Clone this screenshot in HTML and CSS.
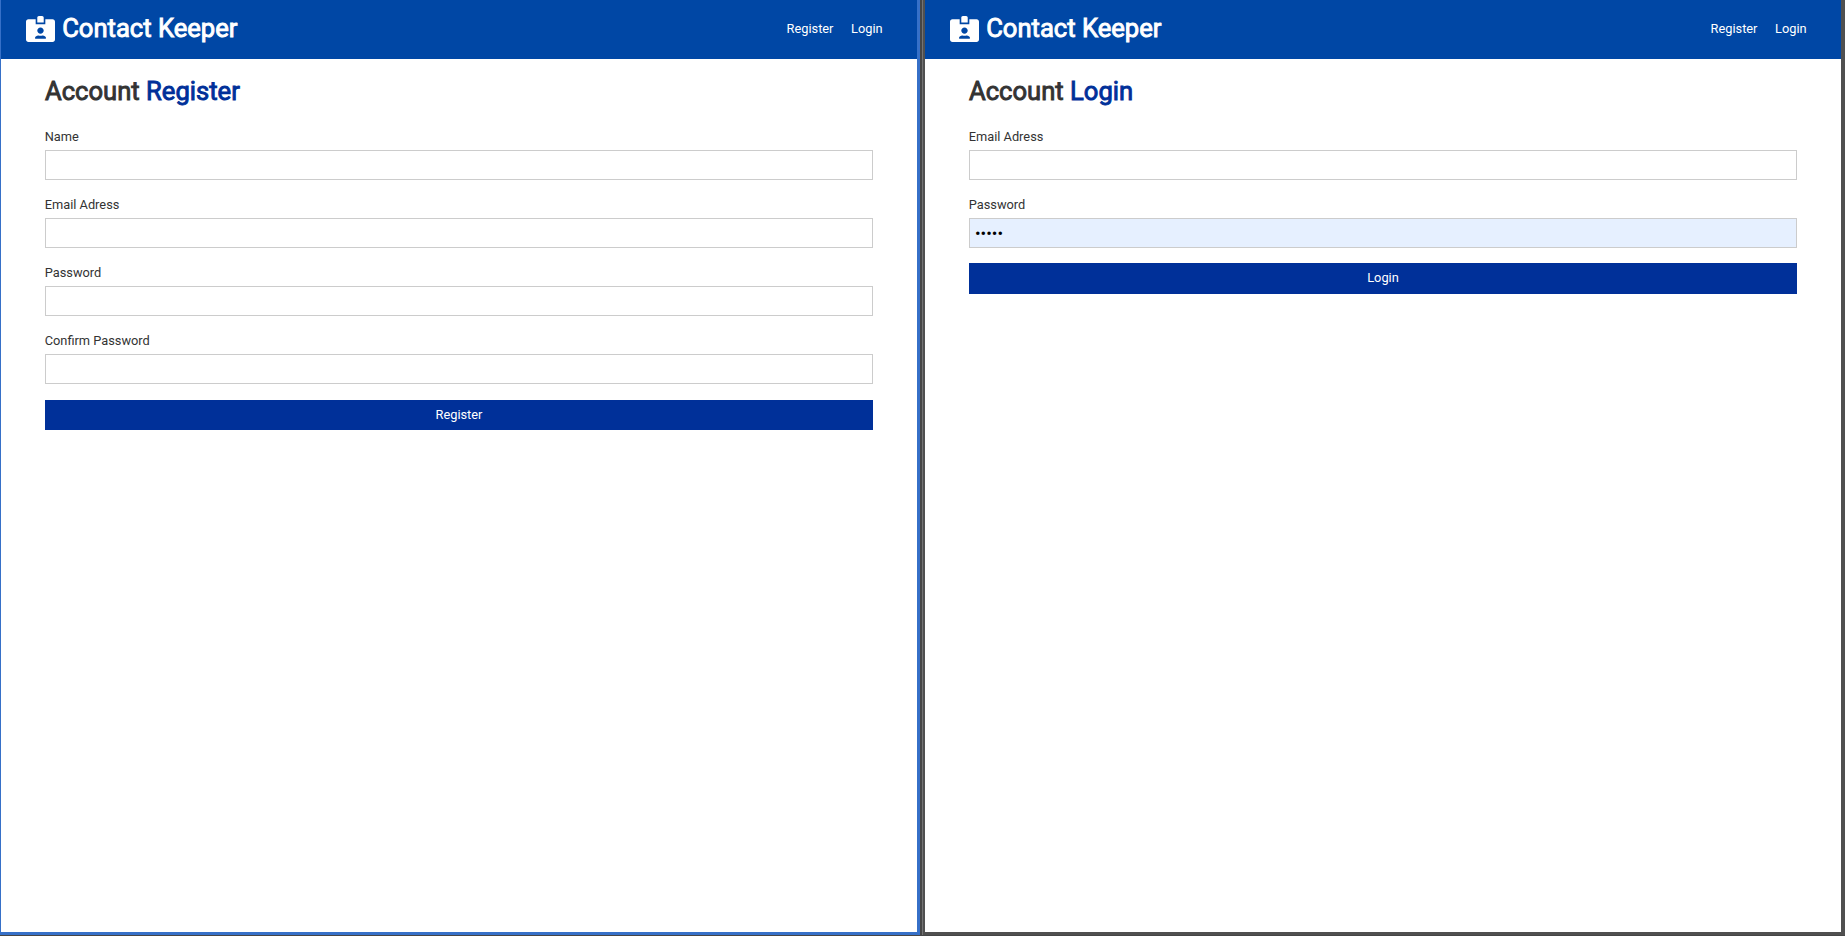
FILE: index.html
```html
<!DOCTYPE html>
<html lang="en">
<head>
<meta charset="utf-8">
<title>Contact Keeper</title>
<link rel="stylesheet" href="styles.css">
</head>
<body>
<svg class="defs" width="0" height="0"><symbol id="card" viewBox="0 0 576 512"><path d="M528 64H384v96H192V64H48C21.5 64 0 85.5 0 112v352c0 26.500 21.500 48 48 48h480c26.500 0 48-21.500 48-48V112c0-26.500-21.500-48-48-48zM288 224c35.300 0 64 28.700 64 64s-28.700 64-64 64-64-28.700-64-64 28.700-64 64-64zm93.300 224H194.700c-10.400 0-18.800-10-15.600-19.800 8.300-25.600 32.400-44.200 60.900-44.200h8.200c12.300 5.100 25.700 8 39.800 8s27.600-2.900 39.800-8h8.200c28.400 0 52.500 18.500 60.900 44.200 3.200 9.900-5.200 19.800-15.600 19.800zM352 32c0-17.700-14.300-32-32-32h-64c-17.700 0-32 14.300-32 32v96h128V32z"/></symbol></svg>
<div class="screens">
  <section class="pane pane-active">
    <header class="navbar">
      <h1 class="brand"><svg class="icon"><use href="#card"/></svg><span>Contact Keeper</span></h1>
      <nav class="links"><a>Register</a><a>Login</a></nav>
    </header>
    <main class="container">
      <h1 class="title">Account <span class="primary">Register</span></h1>
      <form>
        <div class="group"><label>Name</label><input type="text"></div>
        <div class="group"><label>Email Adress</label><input type="text"></div>
        <div class="group"><label>Password</label><input type="password"></div>
        <div class="group"><label>Confirm Password</label><input type="password"></div>
        <button class="btn btn-register" type="button">Register</button>
      </form>
    </main>
  </section>
  <div class="divider"></div>
  <section class="pane">
    <header class="navbar">
      <h1 class="brand"><svg class="icon"><use href="#card"/></svg><span>Contact Keeper</span></h1>
      <nav class="links"><a>Register</a><a>Login</a></nav>
    </header>
    <main class="container">
      <h1 class="title">Account <span class="primary">Login</span></h1>
      <form>
        <div class="group"><label>Email Adress</label><input type="text"></div>
        <div class="group"><label>Password</label><input class="filled" type="password" value="12345"></div>
        <button class="btn" type="button">Login</button>
      </form>
    </main>
  </section>
</div>
</body>
</html>
```
FILE: styles.css
```css
* { box-sizing: border-box; margin: 0; padding: 0; }
html { background: #464646; }
body { font-family: Roboto, sans-serif; font-size: 12.8px; line-height: 20px; color: #333; overflow: hidden; }
.defs { display: block; height: 0; }
.screens { display: flex; width: 1845px; height: 936px; background: #464646; padding-bottom: 1px; }
.pane { width: 920px; background: #fff; border-right: 4px solid #505050; border-bottom: 3px solid #505050; }
.pane-active { border: solid #3670c8; border-width: 0 3px 3px 1px; }
.divider { width: 5px; background: linear-gradient(90deg, #464646 2px, #747474 2px 3px, #505050 3px); }
.navbar { display: flex; justify-content: space-between; align-items: center; height: 59px; padding: 0 34.4px 2px 25.4px; background: #0047a5; color: #fff; }
.brand { display: flex; align-items: center; gap: 6.8px; }
.brand, .title { font-size: 25.6px; font-weight: 400; line-height: 31px; -webkit-text-stroke: 0.9px currentColor; }
.icon { width: 29px; height: 26px; fill: #fff; stroke: none; -webkit-text-stroke: 0; }
.links { display: flex; gap: 17.6px; }
.container { padding: 17px 44px 0; }
.title { height: 31px; margin-bottom: 20px; }
.primary { color: #003099; }
.group { height: 53px; margin-bottom: 15px; }
.group label { display: block; height: 23px; margin-left: -0.3px; }
.group input { display: block; width: 100%; height: 30px; padding: 0 5px; border: 1px solid #ccc; font: 12.8px Roboto, sans-serif; color: #000; }
.group .filled { background: #e6f0ff; font-size: 16.6px; }
.btn { display: block; width: 100%; height: 31px; margin-top: 15px; padding-bottom: 2px; border: 0; background: #003099; color: #fff; font: 12.8px/20px Roboto, sans-serif; }
.btn-register { height: 30px; margin-top: 16px; padding-bottom: 1px; }
```
